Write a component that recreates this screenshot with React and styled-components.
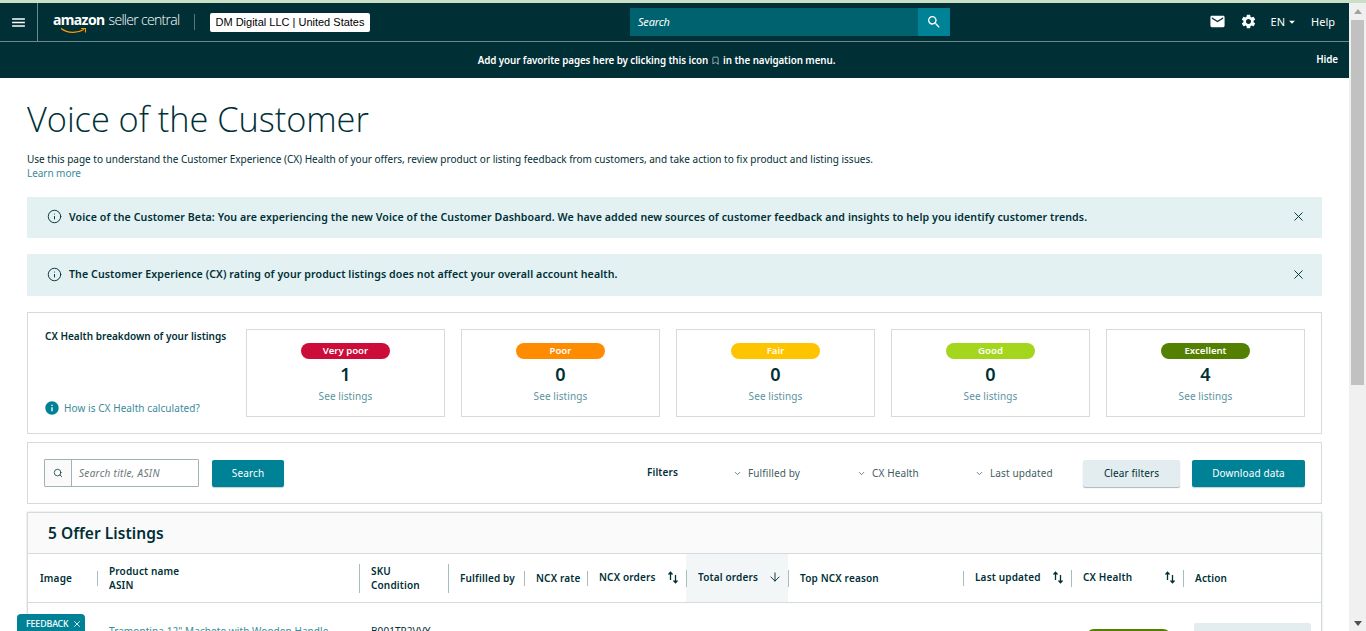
import React from "react";
import styled, { createGlobalStyle } from "styled-components";
import { MdEmail, MdSettings, MdInfo, MdMenu, MdSearch, MdArrowDropDown } from "react-icons/md";
import { Bookmark, ChevronDown, X, Info, ArrowDown, Search as SearchIcon } from "lucide-react";

const Global = createGlobalStyle`
  html, body { margin: 0; padding: 0; height: 631px; overflow: hidden; background: #fff; }
  * { box-sizing: border-box; }
  body { font-family: "Noto Sans", "Open Sans", sans-serif; color: #002f36; }
`;

const Strip = styled.div`height: 3px; background: #c9dfc6;`;
const Shell = styled.div`display: flex; height: 628px; overflow: hidden; position: relative;`;
const Main = styled.main`flex: 1; min-width: 0; overflow: hidden;`;

const Scrollbar = styled.div`
  width: 17px; background: #f0f0f0; display: flex; flex-direction: column; align-items: center; flex: none;
`;
const ScrollArrow = styled.div`
  height: 16px; flex: none; display: flex; align-items: center; justify-content: center; width: 100%;
  &::after { content: ""; border-left: 4px solid transparent; border-right: 4px solid transparent;
    ${p => p.$down ? "border-top: 5px solid #505050;" : "border-bottom: 5px solid #a3a3a3;"} }
`;
const Thumb = styled.div`width: 13px; height: 365px; background: #c1c1c1; margin-top: 1px;`;
const ScrollGap = styled.div`flex: 1;`;

const Header = styled.header`
  height: 39px; background: #002f36; border-bottom: 1px solid #6c8a8d; display: flex; align-items: center; position: relative; color: #fff;
`;
const MenuCell = styled.div`
  width: 38px; height: 100%; border-right: 1px solid #6c8a8d; display: flex; align-items: center; justify-content: center; font-size: 17px; flex: none;
`;
const Logo = styled.div`
  position: relative; margin-left: 15px; height: 30px; width: 127px; display: flex; align-items: baseline; padding-top: 3px; white-space: nowrap; color: #fff;
  b { font-weight: 700; font-size: 14px; margin-right: 4px; letter-spacing: -0.6px; }
  span { font-weight: 300; font-family: "Open Sans", sans-serif; font-size: 14px; letter-spacing: -0.7px; }
  svg { position: absolute; left: 7px; top: 20px; }
`;
const HeadDivider = styled.div`width: 1px; height: 16px; background: #56767a; margin: 0 15px 0 14px; flex: none;`;
const AccountChip = styled.div`
  height: 19px; width: 160px; background: #fff; color: #000; border-radius: 2px; font: 11px/19px "Liberation Sans", Arial, sans-serif; text-align: center; flex: none; white-space: nowrap;
`;
const SearchBox = styled.div`
  position: absolute; left: 630px; top: 5px; width: 320px; height: 28px; background: #00626f; display: flex; align-items: center; justify-content: space-between;
`;
const SearchHint = styled.span`font-size: 11px; font-style: italic; padding: 0 0 2px 8px; color: #fff; letter-spacing: -0.2px;`;
const SearchBtn = styled.div`width: 32px; height: 28px; background: #008296; display: flex; align-items: center; justify-content: center; font-size: 16px;`;
const HeadRight = styled.div`
  margin-left: auto; display: flex; align-items: center; color: #fff; font-size: 11px; padding-right: 14px; padding-bottom: 1px;
`;
const HeadIcon = styled.span`display: flex; font-size: 17px; margin-right: ${p => p.$mr}px;`;
const HeadText = styled.span`display: flex; align-items: center; margin-right: ${p => p.$mr || 0}px;`;

const FavBanner = styled.div`
  height: 36px; background: #002f36; color: #fff; display: flex; align-items: center; justify-content: center; position: relative; font-size: 9.8px; font-weight: 600; gap: 3px; padding: 1px 36px 0 0; letter-spacing: -0.08px;
`;
const Hide = styled.span`position: absolute; right: 11px; top: 11px;`;

const Content = styled.div`padding: 0 27px;`;
const Title = styled.h1`
  margin: 19px 0 0; font-family: "Open Sans", sans-serif; font-weight: 300; font-size: 34.4px; line-height: 44px; color: #002f36; letter-spacing: -0.06px;
`;
const Intro = styled.p`margin: 11px 0 0; font-size: 10px; line-height: 14px; color: #002f36; letter-spacing: 0.005px;`;
const TextLink = styled.a`color: #3b8b99; display: block; font-size: 10px; letter-spacing: -0.05px;`;

const Alert = styled.div`
  height: ${p => p.$h}px; margin-top: ${p => p.$mt}px; background: #e3f1f2; display: flex; align-items: center; padding: 0 16px 2px 20px; font-size: 10.6px; font-weight: 600; color: #002f36; letter-spacing: 0.09px;
`;
const AlertIcon = styled.span`display: flex; margin-right: 7px; color: #002f36;`;
const AlertClose = styled.span`margin-left: auto; display: flex; color: #002f36;`;

const Card = styled.section`border: 1px solid #d5dbdb; background: #fff;`;
const Health = styled(Card)`
  margin-top: 16px; height: 122px; padding: 16px; display: flex; justify-content: space-between;
`;
const HealthSide = styled.div`width: 187px; display: flex; flex-direction: column; justify-content: space-between; flex: none;`;
const HealthTitle = styled.div`font-size: 10px; font-weight: 600; line-height: 14px; letter-spacing: 0.02px; white-space: nowrap; padding-left: 1px;`;
const HowLink = styled.div`display: flex; align-items: center; gap: 4px; color: #3b8b99; font-size: 10px; margin-bottom: 1px; letter-spacing: 0.07px; svg { color: #008296; flex: none; }`;
const Tiles = styled.div`display: flex; gap: 16px;`;
const Tile = styled.div`
  width: 199px; height: 88px; border: 1px solid #d5dbdb; display: flex; flex-direction: column; align-items: center; padding-top: 13px;
`;
const Pill = styled.div`
  width: 89px; height: 16px; border-radius: 8px; background: ${p => p.$c}; color: #fff; font-size: 9.6px; font-weight: 600; line-height: 16px; text-align: center;
`;
const Count = styled.div`font-size: 18px; font-weight: 600; line-height: 22px; margin-top: 4px; color: #002f36;`;
const See = styled.div`font-size: 10px; color: #5c949f; margin-top: 4px; line-height: 14px; letter-spacing: 0.1px;`;

const Filters = styled(Card)`margin-top: 8px; height: 62px; display: flex; align-items: center; padding: 0 16px; `;
const SearchGroup = styled.div`width: 155px; height: 28px; border: 1px solid #a2b3b5; display: flex; flex: none; border-radius: 1px;`;
const SearchAddon = styled.div`width: 27px; background: #fafafa; border-right: 1px solid #a2b3b5; display: flex; align-items: center; justify-content: center;`;
const SearchPlaceholder = styled.div`font-size: 10px; font-style: italic; color: #6c7778; line-height: 26px; padding-left: 7px; letter-spacing: 0.3px;`;
const Button = styled.div`
  height: 27px; width: ${p => p.$w}px; margin-left: ${p => p.$ml || 0}px; border-radius: 2px; background: ${p => p.$light ? "#e3ecee" : "#008296"}; color: ${p => p.$light ? "#002f36" : "#fff"};
  box-shadow: 0 1px 1px ${p => p.$light ? "#aab7b8" : "#c5d0d1"}; font-size: 10px; font-weight: 400; line-height: 27px; text-align: center; flex: none; letter-spacing: 0.12px;
`;
const FilterLabel = styled.div`font-size: 10px; font-weight: 600; margin: 0 0 2px 363px; width: 86px; flex: none; letter-spacing: 0.1px;`;
const FilterItem = styled.div`display: flex; align-items: center; width: ${p => p.$w}px; flex: none; font-size: 10px; color: #3f5c61; gap: 6px; white-space: nowrap; letter-spacing: 0.12px; svg { flex: none; }`;

const TableCard = styled(Card)`margin-top: 8px; height: 130px; overflow: hidden; box-shadow: 0 0 2px #cfd8d9;`;
const TableHead = styled.div`height: 41px; background: #fafafa; border-bottom: 1px solid #d5dbdb; padding-left: 20px; font-size: 15.5px; font-weight: 600; line-height: 40px; letter-spacing: 0.05px;`;
const grid = "69px 262px 89px 76px 63px 99px 102px 175px 108px 112px 1fr";
const HeadRow = styled.div`display: grid; grid-template-columns: ${grid}; height: 49px; border-bottom: 1px solid #d5dbdb; align-items: stretch;`;
const Th = styled.div`
  display: flex; align-items: center; font-size: 10px; font-weight: 600; line-height: 14px; background: ${p => p.$active ? "#f3f6f6" : "transparent"}; padding: 0 ${p => p.$pr || 0}px 0 0; letter-spacing: 0.16px; white-space: nowrap; min-width: 0;
`;
const Rule = styled.span`width: 1px; height: ${p => p.$h}px; background: #a9bcbe; flex: none; margin-right: 11px;`;
const ThText = styled.span`flex: 1; padding-left: ${p => p.$pl || 0}px; position: relative; top: ${p => p.$up ? -1 : 0}px;`;
const SortIcon = styled.span`display: flex; flex: none; width: 14px; justify-content: center; position: relative; top: -1px; left: 1px;`;
const BodyRow = styled.div`display: grid; grid-template-columns: ${grid}; height: 40px; position: relative;`;
const Td = styled.div`font-size: 10px; white-space: nowrap; padding: ${p => p.$pt}px 0 0 ${p => p.$pl || 0}px; letter-spacing: 0.08px; color: ${p => p.$link ? "#3b8b99" : "#002f36"};`;
const RowPill = styled.div`width: 85px; height: 16px; border-radius: 8px; background: #538000; margin: 26px 0 0 15px;`;
const RowBtn = styled.div`width: 117px; height: 20px; border-radius: 2px; background: #e3ecee; margin: 20px 0 0 11px;`;

const Feedback = styled.div`
  position: absolute; left: 17px; top: 611px; width: 68px; height: 20px; background: #008296; color: #fff; border-radius: 4px 4px 0 0; font-size: 8.8px; font-weight: 500; line-height: 18px; padding-left: 9px; display: flex; align-items: center; gap: 3px; letter-spacing: -0.1px;
`;

const Sort = () => (
  <svg width="12" height="13" viewBox="0 0 12 13" fill="none" stroke="#002f36" strokeWidth="1.3">
    <path d="M3.5 9V1.5M1.5 3.5L3.5 1.2L5.5 3.5" />
    <path d="M8.5 4v7.5M6.5 9.5l2 2.3l2-2.3" />
  </svg>
);

const tiles = [
  ["Very poor", "#cc0c39", 1],
  ["Poor", "#ff8c00", 0],
  ["Fair", "#ffc400", 0],
  ["Good", "#a4d61e", 0],
  ["Excellent", "#538000", 4],
];

export default function App() {
  return (
    <>
      <Global />
      <Strip />
      <Shell>
        <Main>
          <Header>
            <MenuCell><MdMenu /></MenuCell>
            <Logo>
              <b>amazon</b><span>seller central</span>
              <svg width="28" height="8" viewBox="0 0 28 8" fill="none">
                <path d="M1 1.5C8 6.5 17 6.5 24 2.5" stroke="#f90" strokeWidth="1.4" />
                <path d="M21 1.5h4.5v4" stroke="#f90" strokeWidth="1.1" />
              </svg>
            </Logo>
            <HeadDivider />
            <AccountChip>DM Digital LLC | United States</AccountChip>
            <SearchBox>
              <SearchHint>Search</SearchHint>
              <SearchBtn><MdSearch /></SearchBtn>
            </SearchBox>
            <HeadRight>
              <HeadIcon $mr={14}><MdEmail /></HeadIcon>
              <HeadIcon $mr={14}><MdSettings /></HeadIcon>
              <HeadText $mr={12}>EN<MdArrowDropDown size={14} /></HeadText>
              <HeadText>Help</HeadText>
            </HeadRight>
          </Header>
          <FavBanner>
            <span>Add your favorite pages here by clicking this icon</span>
            <Bookmark size={9} strokeWidth={1.5} />
            <span>in the navigation menu.</span>
            <Hide>Hide</Hide>
          </FavBanner>
          <Content>
            <Title>Voice of the Customer</Title>
            <Intro>
              Use this page to understand the Customer Experience (CX) Health of your offers, review product or listing feedback from customers, and take action to fix product and listing issues.
              <TextLink>Learn more</TextLink>
            </Intro>
            <Alert $h={41} $mt={17}>
              <AlertIcon><Info size={15} strokeWidth={1.5} /></AlertIcon>
              Voice of the Customer Beta: You are experiencing the new Voice of the Customer Dashboard. We have added new sources of customer feedback and insights to help you identify customer trends.
              <AlertClose><X size={15} strokeWidth={1.5} /></AlertClose>
            </Alert>
            <Alert $h={42} $mt={16}>
              <AlertIcon><Info size={15} strokeWidth={1.5} /></AlertIcon>
              The Customer Experience (CX) rating of your product listings does not affect your overall account health.
              <AlertClose><X size={15} strokeWidth={1.5} /></AlertClose>
            </Alert>
            <Health>
              <HealthSide>
                <HealthTitle>CX Health breakdown of your listings</HealthTitle>
                <HowLink><MdInfo size={16} />How is CX Health calculated?</HowLink>
              </HealthSide>
              <Tiles>
                {tiles.map(([label, color, n]) => (
                  <Tile key={label}>
                    <Pill $c={color}>{label}</Pill>
                    <Count>{n}</Count>
                    <See>See listings</See>
                  </Tile>
                ))}
              </Tiles>
            </Health>
            <Filters>
              <SearchGroup>
                <SearchAddon><SearchIcon size={10} strokeWidth={1.8} /></SearchAddon>
                <SearchPlaceholder>Search title, ASIN</SearchPlaceholder>
              </SearchGroup>
              <Button $w={72} $ml={13}>Search</Button>
              <FilterLabel>Filters</FilterLabel>
              <FilterItem $w={124}><ChevronDown size={9} />Fulfilled by</FilterItem>
              <FilterItem $w={118}><ChevronDown size={9} />CX Health</FilterItem>
              <FilterItem $w={108}><ChevronDown size={9} />Last updated</FilterItem>
              <Button $w={97} $light>Clear filters</Button>
              <Button $w={113} $ml={12}>Download data</Button>
            </Filters>
            <TableCard>
              <TableHead>5 Offer Listings</TableHead>
              <HeadRow>
                <Th><ThText $pl={12}>Image</ThText></Th>
                <Th><Rule $h={15} /><ThText>Product name<br />ASIN</ThText></Th>
                <Th><Rule $h={29} /><ThText>SKU<br />Condition</ThText></Th>
                <Th><Rule $h={29} /><ThText>Fulfilled by</ThText></Th>
                <Th><Rule $h={15} /><ThText>NCX rate</ThText></Th>
                <Th $pr={7}><Rule $h={15} /><ThText $up>NCX orders</ThText><SortIcon><Sort /></SortIcon></Th>
                <Th $active $pr={7}><Rule $h={17} /><ThText $up>Total orders</ThText><SortIcon><ArrowDown size={14} strokeWidth={1.6} /></SortIcon></Th>
                <Th><Rule $h={17} /><ThText>Top NCX reason</ThText></Th>
                <Th $pr={7}><Rule $h={15} /><ThText $up>Last updated</ThText><SortIcon><Sort /></SortIcon></Th>
                <Th $pr={7}><Rule $h={17} /><ThText $up>CX Health</ThText><SortIcon><Sort /></SortIcon></Th>
                <Th><Rule $h={17} /><ThText>Action</ThText></Th>
              </HeadRow>
              <BodyRow>
                <div />
                <Td $pt={21} $pl={12} $link>Tramontina 12" Machete with Wooden Handle</Td>
                <Td $pt={21} $pl={12}>B001TP2VVY</Td>
                <div /><div /><div /><div /><div /><div />
                <RowPill />
                <RowBtn />
              </BodyRow>
            </TableCard>
          </Content>
        </Main>
        <Scrollbar>
          <ScrollArrow />
          <Thumb />
          <ScrollGap />
          <ScrollArrow $down />
        </Scrollbar>
        <Feedback>FEEDBACK <X size={10} /></Feedback>
      </Shell>
    </>
  );
}
